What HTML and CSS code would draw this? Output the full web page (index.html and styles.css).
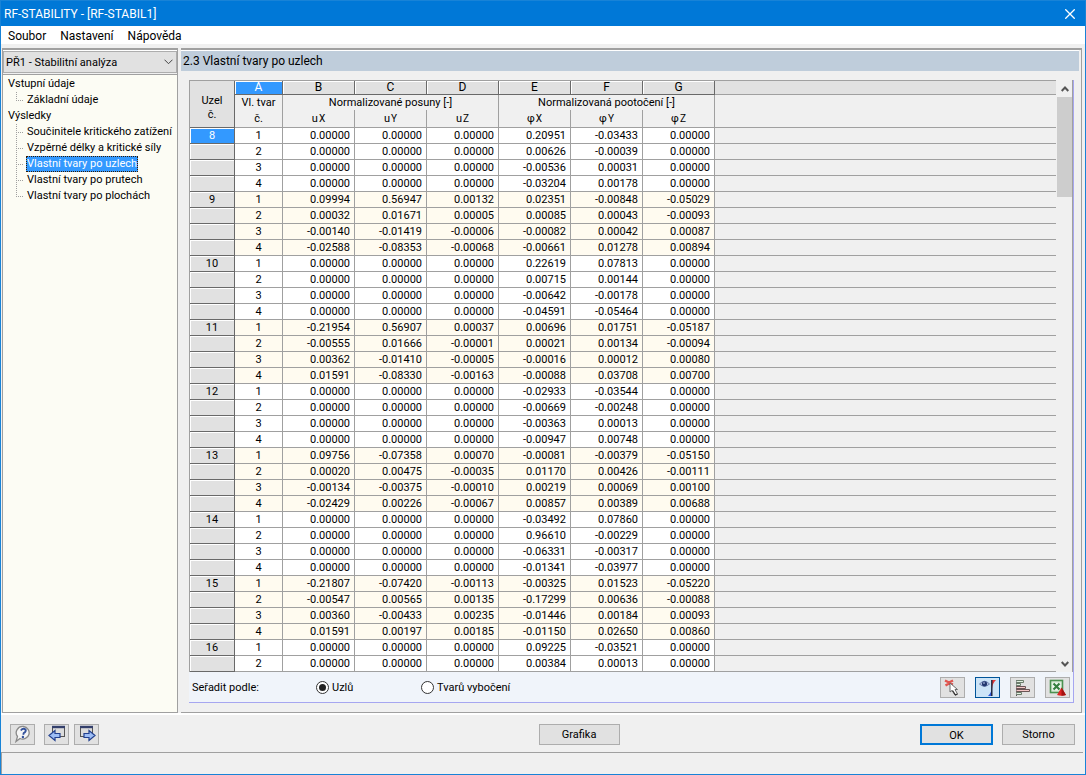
FILE: index.html
```html
<!DOCTYPE html>
<html lang="cs">
<head>
<meta charset="utf-8">
<title>RF-STABILITY - [RF-STABIL1]</title>
<link rel="stylesheet" href="styles.css">
</head>
<body>
<div class="window">
  <header class="titlebar">
    <h1 class="titlebar-text">RF-STABILITY - [RF-STABIL1]</h1>
    <button class="close" type="button" aria-label="Zavřít">
      <svg width="10" height="10" viewBox="0 0 10 10"><path d="M0.3 0.3 9.7 9.7M9.7 0.3 0.3 9.7" stroke="#fff" stroke-width="1.3"/></svg>
    </button>
  </header>
  <nav class="menu">
    <button type="button">Soubor</button>
    <button type="button">Nastavení</button>
    <button type="button">Nápověda</button>
  </nav>
  <div class="body">
    <aside class="sidebar">
      <div class="combo">
        <select aria-label="Případ"><option>PŘ1 - Stabilitní analýza</option></select>
        <svg class="combo-arrow" width="9" height="6" viewBox="0 0 9 6"><path d="M0.5 0.7 4.5 4.7 8.5 0.7" fill="none" stroke="#444" stroke-width="1"/></svg>
      </div>
      <ul class="tree">
        <li><a href="#vstup">Vstupní údaje</a>
          <ul>
            <li><a href="#zakladni">Základní údaje</a></li>
          </ul>
        </li>
        <li><a href="#vysledky">Výsledky</a>
          <ul>
            <li><a href="#soucinitele">Součinitele kritického zatížení</a></li>
            <li><a href="#delky">Vzpěrné délky a kritické síly</a></li>
            <li><a class="selected" href="#uzly">Vlastní tvary po uzlech</a></li>
            <li><a href="#pruty">Vlastní tvary po prutech</a></li>
            <li><a href="#plochy">Vlastní tvary po plochách</a></li>
          </ul>
        </li>
      </ul>
    </aside>
    <main class="content">
      <h2 class="content-title">2.3 Vlastní tvary po uzlech</h2>
      <div class="panel">
        <div class="grid-area">
          <table class="grid">
            <colgroup>
              <col class="c-node"><col class="c-mode">
              <col class="c-val"><col class="c-val"><col class="c-val">
              <col class="c-val"><col class="c-val"><col class="c-val">
              <col>
            </colgroup>
            <thead>
              <tr class="letters">
                <th rowspan="3" class="corner">Uzel<br>č.</th>
                <th class="active">A</th><th>B</th><th>C</th><th>D</th><th>E</th><th>F</th><th>G</th>
                <td class="blank"></td>
              </tr>
              <tr class="groups">
                <th>Vl. tvar</th>
                <th colspan="3">Normalizované posuny [-]</th>
                <th colspan="3">Normalizovaná pootočení [-]</th>
                <td rowspan="2" class="blank last"></td>
              </tr>
              <tr class="units">
                <th>č.</th>
                <th>u<span>X</span></th><th>u<span>Y</span></th><th>u<span>Z</span></th>
                <th>φ<span>X</span></th><th>φ<span>Y</span></th><th>φ<span>Z</span></th>
              </tr>
            </thead>
            <tbody id="rows"></tbody>
          </table>
          <div class="scrollbar">
            <button type="button" aria-label="Nahoru"><svg width="8" height="6" viewBox="0 0 8 6"><path d="M0.7 5 4 1.5 7.3 5" fill="none" stroke="#555" stroke-width="2"/></svg></button>
            <div class="track"><div class="thumb"></div></div>
            <button type="button" aria-label="Dolů"><svg width="8" height="6" viewBox="0 0 8 6"><path d="M0.7 1 4 4.5 7.3 1" fill="none" stroke="#555" stroke-width="2"/></svg></button>
          </div>
        </div>
        <div class="options">
          <span class="options-label">Seřadit podle:</span>
          <label class="radio"><input type="radio" name="sort" checked>Uzlů</label>
          <label class="radio"><input type="radio" name="sort">Tvarů vybočení</label>
          <div class="tools">
            <button type="button" class="tool" aria-label="Vybrat v grafice">
              <svg width="18" height="18" viewBox="0 0 18 18"><path d="M1 1.500 5 3.500 9 1.500M1.500 6.500 5 4.500 9 5.500" fill="none" stroke="#e0554f" stroke-width="2.400"/><path d="M6 4v9l2-1.500 3 4.500 2.500-1-2.500-4.500h2.500z" fill="#fff" stroke="#6a6a6a" stroke-width="1"/><path d="M8.500 11.500 11.500 16l2-1" fill="none" stroke="#333" stroke-width="1.200"/></svg>
            </button>
            <button type="button" class="tool on" aria-label="Zobrazit">
              <svg width="18" height="18" viewBox="0 0 18 18"><path d="M0.500 5Q5.500-0.500 10.500 5Q5.500 9.500 0.500 5z" fill="#b9c6e2" stroke="#6a7fb0"/><circle cx="5.500" cy="4.800" r="2.600" fill="#23386f"/><circle cx="5" cy="4" r="0.800" fill="#cfdcff"/><path d="M13 1h4q-3.500 3-4 9z" fill="#e23838"/><path d="M13 8v9h-4q3.500-3 4-9z" fill="#2c55d8"/><path d="M12.800 1v16" stroke="#1c2238" stroke-width="1.400"/></svg>
            </button>
            <button type="button" class="tool" aria-label="Seznam">
              <svg width="18" height="18" viewBox="0 0 18 18"><path d="M2.500 1v16" stroke="#555"/><path d="M2.500 1.500h7v2h-7M2.500 13.500h5v2h-5" fill="#e2f0e2" stroke="#6b7d6b"/><path d="M2.500 4.500h4v2h-4" fill="#e2f0e2" stroke="#6b7d6b"/><path d="M2.500 7.500h9v2h-9M2.500 10.500h13v2h-13" fill="#f4c8c8" stroke="#6a5555"/></svg>
            </button>
            <button type="button" class="tool" aria-label="Export do Excelu">
              <svg width="18" height="18" viewBox="0 0 18 18"><rect x="1.500" y="1.500" width="12" height="12" fill="#d9ecd8" stroke="#4b9150" stroke-width="1.600"/><rect x="3.500" y="4" width="8" height="7" fill="#f3faf2"/><path d="M4.500 4.500 10.500 10.500M10.500 4.500 4.500 10.500" stroke="#358040" stroke-width="2.200"/><path d="M12.500 8.500 8 16q4 1.500 9 0z" fill="#e02424"/><path d="M12.500 8.500 17 16q-2 .8-4.500 .8z" fill="#a31212"/></svg>
            </button>
          </div>
        </div>
      </div>
    </main>
  </div>
  <footer class="actions">
    <button type="button" class="tool" aria-label="Nápověda">
      <svg width="18" height="18" viewBox="0 0 18 18"><path d="M9.500 1.500a6.500 6.300 0 1 1-3.500 12L2 16.500l1.500-5A6.500 6.300 0 0 1 9.500 1.500z" fill="#f6f6f6" stroke="#8a8a8a" stroke-width="1.300"/><path d="M6.800 5.500Q9 2.700 11.600 4.600Q12.300 6.700 9.800 8L9.200 9.800" fill="none" stroke="#34529c" stroke-width="1.900"/><circle cx="8.900" cy="12" r="1.200" fill="#34529c"/></svg>
    </button>
    <button type="button" class="tool gap" aria-label="Předchozí">
      <svg width="18" height="18" viewBox="0 0 18 18"><rect x="4.500" y="1.500" width="12" height="10" fill="#dcdcdc" stroke="#555"/><path d="M4 2h13" stroke="#34406c" stroke-width="2.400"/><path d="M1 10.500 7 5.500v3h5v4H7v3z" fill="#9dbdf5" stroke="#22408f" stroke-width="1.200"/></svg>
    </button>
    <button type="button" class="tool" aria-label="Další">
      <svg width="18" height="18" viewBox="0 0 18 18"><rect x="2.500" y="1.500" width="12" height="10" fill="#dcdcdc" stroke="#555"/><path d="M2 2h13" stroke="#34406c" stroke-width="2.400"/><path d="M17 10.500 11 5.500v3H6v4h5v3z" fill="#9dbdf5" stroke="#22408f" stroke-width="1.200"/></svg>
    </button>
    <div class="space-before"></div>
    <button type="button" class="push wide">Grafika</button>
    <div class="space-after"></div>
    <button type="button" class="push default">OK</button>
    <button type="button" class="push">Storno</button>
  </footer>
  <div class="status"></div>
</div>
<script src="grid.js"></script>
</body>
</html>
```
FILE: styles.css
```css
* { box-sizing: border-box; }
body { margin: 0; font: 11px/16px Roboto, "Liberation Sans", sans-serif; color: #000; }
button { font: inherit; color: inherit; padding: 0; border: 0; background: none; }
svg { display: block; }
.window { display: flex; flex-direction: column; min-height: 100vh; background: #f0f0f0; border: solid #1883d7; border-width: 0 1px 1px; }

.titlebar { display: flex; align-items: center; justify-content: space-between; height: 26px; padding: 0 10px 0 3px; background: #0078d7; border-top: 1px solid #1883d7; color: #fff; }
.titlebar-text { margin: 0; font: 12px/16px Roboto, sans-serif; }
.menu { display: flex; gap: 14px; height: 18px; padding: 0 7px; background: #fff; font: 12px/20px Roboto, sans-serif; }

.body { display: flex; flex: 1; gap: 3px; margin-top: 4px; padding-left: 1px; border-bottom: 2px solid #fff; }
.sidebar { display: flex; flex-direction: column; width: 176px; border: 1px solid #a0a0a0; border-top-width: 2px; }
.combo { position: relative; height: 23px; padding-top: 1px; background: #fff; }
.combo select { width: 100%; height: 22px; padding: 1px 2px 0; appearance: none; border: 1px solid #adadad; border-radius: 0; background: #e1e1e1; font: inherit; color: inherit; }
.combo-arrow { position: absolute; right: 4px; top: 9px; }
.tree { flex: 1; margin: 1px 0 0; padding: 1px 0 0 4px; list-style: none; background: #fcfcf4; border-top: 1px solid #a0a0a0; }
.tree ul { margin: 0; padding: 0 0 0 9px; list-style: none; }
.tree a { display: inline-block; height: 16px; padding: 0 1px; color: #000; text-decoration: none; white-space: nowrap; }
.tree ul li { display: flex; height: 16px; }
.tree ul li::before { content: ""; width: 10px; height: 9px; background: repeating-linear-gradient(90deg, #a0a0a0 0 1px, transparent 1px 2px) 0 100% / 8px 1px no-repeat, repeating-linear-gradient(#a0a0a0 0 1px, transparent 1px 2px) 0 0 / 1px 100% no-repeat; }
.tree ul li:not(:last-child) { background: repeating-linear-gradient(#a0a0a0 0 1px, transparent 1px 2px) 0 0 / 1px 100% no-repeat; }
.tree .selected { background: #3399ff; color: #fff; outline: 1px dotted #331a00; outline-offset: -1px; }

.content { display: flex; flex-direction: column; flex: 1; min-width: 0; margin-right: 3px; padding-right: 2px; border: solid #a0a0a0; border-width: 2px 1px 1px 0; }
.content-title { height: 21px; margin: 0; padding: 1px 2px 0; background: #bfcddb; border-top: 1px solid #fff; font: 12px/18px Roboto, sans-serif; }
.panel { flex: 1; margin: 9px 5px 9px 8px; border-right: 1px solid #a6a6f0; border-bottom: 1px solid #a6a6f0; background: #f0f4fa; }
.grid-area { display: flex; background: #f0f0f0; }
.grid { flex: 1; min-width: 0; table-layout: fixed; border-collapse: separate; border-spacing: 0; border: solid #a0a0a0; border-width: 1px 0 0 1px; font-size: 11px; }
.c-node { width: 45px; }
.c-mode { width: 48px; }
.c-val { width: 72px; }
.grid th, .grid td { padding: 0; border: solid #a0a0a0; border-width: 0 1px 1px 0; font-weight: normal; text-align: center; line-height: 15px; white-space: nowrap; }
.grid tbody td { height: 16px; background: #fff; }
.grid .alt td { background: #fffbf0; }
.grid tbody .v { padding-right: 4px; text-align: right; }
.grid .blank, .grid tbody .blank { background: #f0f0f0; border-right: 0; }
.grid .letters th, .grid .letters td { height: 14px; line-height: 13px; background: #e1e1e1; border-color: #696969; font-size: 12px; }
.grid .letters .blank { border-color: #a0a0a0; }
.grid .letters th { box-shadow: inset 1px 1px #fff; }
.grid .letters .active { background: #3399ff; color: #fff; }
.grid .letters .corner { font-size: 11px; line-height: 14px; padding-top: 8px; box-shadow: none; }
.grid .groups th { height: 15px; line-height: 15px; border-bottom: 0; }
.grid .units th { height: 18px; line-height: 16px; }
.grid .units span { font-size: 10px; margin-left: 1px; }
.grid tbody th { background: #e1e1e1; border-color: #696969; box-shadow: inset 1px 1px #fff; line-height: 13px; }
.grid tbody .active { background: #3399ff; color: #fff; }

.scrollbar { display: flex; flex-direction: column; width: 17px; padding-left: 1px; border-right: 1px solid #a0a0a0; }
.scrollbar button { display: grid; place-items: center; height: 17px; }
.track { flex: 1; }
.thumb { height: 18%; background: #cdcdcd; }

.options { display: flex; align-items: center; height: 30px; padding: 1px 3px 0; }
.options-label { width: 124px; }
.radio { display: flex; align-items: center; gap: 3px; width: 105px; white-space: nowrap; }
.radio input { display: grid; place-items: center; width: 13px; height: 13px; margin: 0; appearance: none; border: 1px solid #333; border-radius: 50%; background: #fff; }
.radio input:checked::after { content: ""; width: 7px; height: 7px; border-radius: 50%; background: #222; }
.tools { display: flex; gap: 10px; margin-left: auto; }
.tool { display: grid; place-items: center; width: 25px; height: 21px; border: 1px solid #adadad; background: #e1e1e1; }
.tool.on { border-color: #005499; background: #cce4f7; }

.actions { display: flex; align-items: center; gap: 5px; height: 37px; padding: 1px 10px 0 9px; }
.actions .gap { margin-left: 4px; }
.space-before { flex: 3; }
.space-after { flex: 2; }
.push { width: 73px; height: 21px; margin-left: 4px; padding-top: 2px; border: 1px solid #adadad; background: #e1e1e1; }
.push.wide { width: 81px; margin: 0; }
.push.default { border: 2px solid #0078d7; }
.status { height: 22px; margin: 0 2px 0 0; border: solid #a0a0a0; border-width: 1px 0 0 1px; }
```
FILE: grid.js
```js
const Z = "0.00000";
const rows = [
  [8, 1, Z, Z, Z, "0.20951", "-0.03433", Z],
  [8, 2, Z, Z, Z, "0.00626", "-0.00039", Z],
  [8, 3, Z, Z, Z, "-0.00536", "0.00031", Z],
  [8, 4, Z, Z, Z, "-0.03204", "0.00178", Z],
  [9, 1, "0.09994", "0.56947", "0.00132", "0.02351", "-0.00848", "-0.05029"],
  [9, 2, "0.00032", "0.01671", "0.00005", "0.00085", "0.00043", "-0.00093"],
  [9, 3, "-0.00140", "-0.01419", "-0.00006", "-0.00082", "0.00042", "0.00087"],
  [9, 4, "-0.02588", "-0.08353", "-0.00068", "-0.00661", "0.01278", "0.00894"],
  [10, 1, Z, Z, Z, "0.22619", "0.07813", Z],
  [10, 2, Z, Z, Z, "0.00715", "0.00144", Z],
  [10, 3, Z, Z, Z, "-0.00642", "-0.00178", Z],
  [10, 4, Z, Z, Z, "-0.04591", "-0.05464", Z],
  [11, 1, "-0.21954", "0.56907", "0.00037", "0.00696", "0.01751", "-0.05187"],
  [11, 2, "-0.00555", "0.01666", "-0.00001", "0.00021", "0.00134", "-0.00094"],
  [11, 3, "0.00362", "-0.01410", "-0.00005", "-0.00016", "0.00012", "0.00080"],
  [11, 4, "0.01591", "-0.08330", "-0.00163", "-0.00088", "0.03708", "0.00700"],
  [12, 1, Z, Z, Z, "-0.02933", "-0.03544", Z],
  [12, 2, Z, Z, Z, "-0.00669", "-0.00248", Z],
  [12, 3, Z, Z, Z, "-0.00363", "0.00013", Z],
  [12, 4, Z, Z, Z, "-0.00947", "0.00748", Z],
  [13, 1, "0.09756", "-0.07358", "0.00070", "-0.00081", "-0.00379", "-0.05150"],
  [13, 2, "0.00020", "0.00475", "-0.00035", "0.01170", "0.00426", "-0.00111"],
  [13, 3, "-0.00134", "-0.00375", "-0.00010", "0.00219", "0.00069", "0.00100"],
  [13, 4, "-0.02429", "0.00226", "-0.00067", "0.00857", "0.00389", "0.00688"],
  [14, 1, Z, Z, Z, "-0.03492", "0.07860", Z],
  [14, 2, Z, Z, Z, "0.96610", "-0.00229", Z],
  [14, 3, Z, Z, Z, "-0.06331", "-0.00317", Z],
  [14, 4, Z, Z, Z, "-0.01341", "-0.03977", Z],
  [15, 1, "-0.21807", "-0.07420", "-0.00113", "-0.00325", "0.01523", "-0.05220"],
  [15, 2, "-0.00547", "0.00565", "0.00135", "-0.17299", "0.00636", "-0.00088"],
  [15, 3, "0.00360", "-0.00433", "0.00235", "-0.01446", "0.00184", "0.00093"],
  [15, 4, "0.01591", "0.00197", "0.00185", "-0.01150", "0.02650", "0.00860"],
  [16, 1, Z, Z, Z, "0.09225", "-0.03521", Z],
  [16, 2, Z, Z, Z, "0.00384", "0.00013", Z]
];
document.getElementById("rows").innerHTML = rows.map(([node, mode, ...values], i) =>
  `<tr class="${node % 2 ? "alt" : ""}"><th class="${i === 0 ? "active" : ""}">${mode === 1 ? node : ""}</th>` +
  `<td>${mode}</td>${values.map(v => `<td class="v">${v}</td>`).join("")}<td class="blank"></td></tr>`
).join("");
```
